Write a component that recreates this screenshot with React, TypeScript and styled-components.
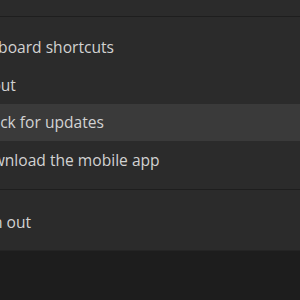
import React from "react";
import styled, { createGlobalStyle } from "styled-components";

const Global = createGlobalStyle`
  html, body { margin: 0; padding: 0; background: #1d1d1d; overflow: hidden; }
  body { font-family: "Open Sans", "Noto Sans", sans-serif; }
`;

const Viewport = styled.div`
  width: 300px;
  height: 300px;
  overflow: hidden;
  background: #1d1d1d;
`;

const Panel = styled.div`
  margin-left: -40px;
  width: 400px;
  background: #2b2b2b;
  border-bottom: 1px solid #242424;
`;

const PrevSection = styled.div`
  height: 16px;
`;

const Divider = styled.div`
  height: 1px;
  background: #1e1e1e;
`;

const Group = styled.div<{ $pt: number; $pb: number }>`
  padding-top: ${(p) => p.$pt}px;
  padding-bottom: ${(p) => p.$pb}px;
  display: flex;
  flex-direction: column;
`;

const Item = styled.div<{ $active?: boolean }>`
  height: 37.5px;
  display: flex;
  align-items: center;
  padding-left: 12px;
  background: ${(p) => (p.$active ? "#3a3a3a" : "transparent")};
  color: #d2d2d2;
  font-size: 15.6px;
  white-space: nowrap;
`;

export default function App() {
  return (
    <Viewport>
      <Global />
      <Panel>
        <PrevSection />
        <Divider />
        <Group $pt={11.5} $pb={10.5}>
          <Item>Keyboard shortcuts</Item>
          <Item>About</Item>
          <Item $active>Check for updates</Item>
          <Item>Download the mobile app</Item>
        </Group>
        <Divider />
        <Group $pt={13} $pb={9}>
          <Item>Sign out</Item>
        </Group>
      </Panel>
    </Viewport>
  );
}
